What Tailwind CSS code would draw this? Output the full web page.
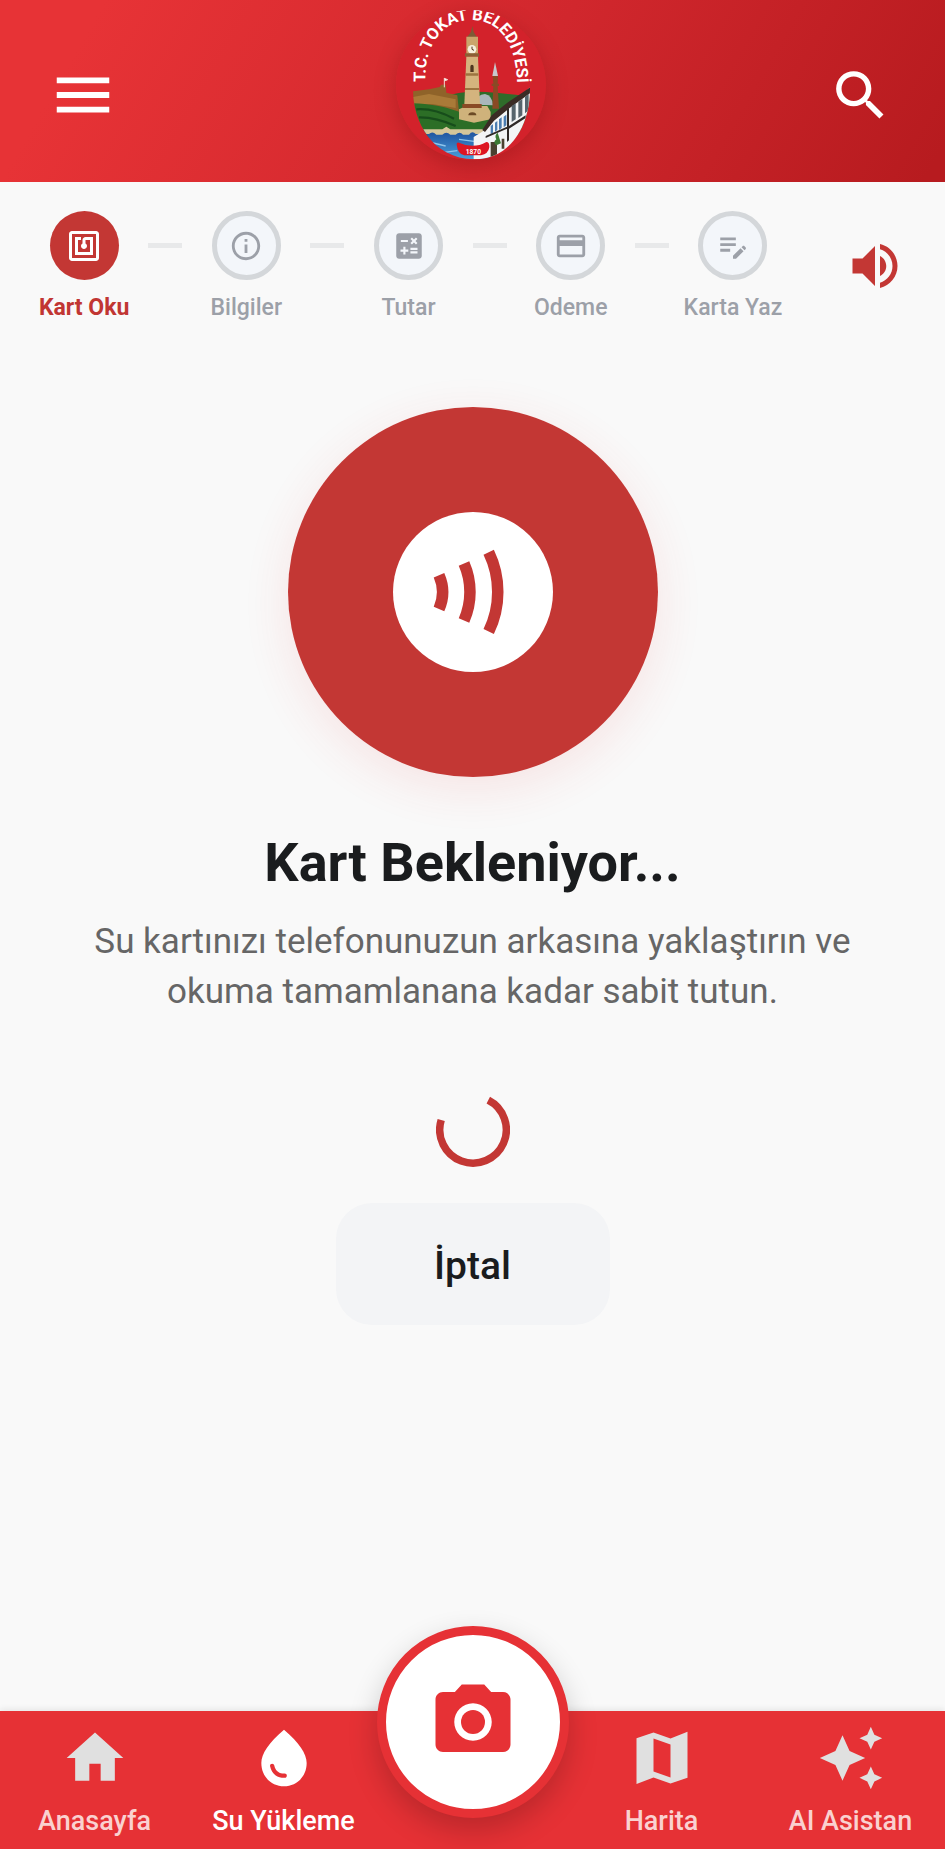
<!DOCTYPE html>
<html lang="tr">
<head>
    <meta charset="UTF-8">
    <meta name="viewport" content="width=device-width, initial-scale=1.0">
    <title>Su Yükleme - Kart Oku</title>
    <script src="https://cdn.jsdelivr.net/npm/@tailwindcss/browser@4"></script>
</head>
<body class="min-h-screen flex flex-col bg-[#f9f9f9] font-[Roboto,sans-serif] text-[#1a1c1e]">

    <!-- Header -->
    <header class="h-[182px] pl-12 pr-[52px] pt-2 flex items-center justify-between bg-[linear-gradient(120deg,#e73336_10%,#d1272d_55%,#b71b1f_98%)]">
        <button type="button" aria-label="Menü" class="flex-1 flex text-white">
            <svg class="size-[70px]" viewBox="0 0 24 24" fill="currentColor"><path d="M3 18h18v-2H3v2zm0-5h18v-2H3v2zm0-7v2h18V6H3z"/></svg>
        </button>

        <a href="#" aria-label="T.C. Tokat Belediyesi" class="mb-5 rounded-full shadow-[0_6px_22px_rgba(90,0,0,0.25)]">
            <svg class="size-[150px]" viewBox="51 24 450 450">
                <defs>
                    <clipPath id="round"><circle cx="276" cy="249" r="225"/></clipPath>
                    <clipPath id="shield"><path d="M102 20H453V262C453 350 410 470 285 472C160 470 102 360 102 262Z"/></clipPath>
                    <path id="arc" d="M139 240C136 130 190 54 277 54C364 54 420 130 414 275"/>
                    <linearGradient id="water" x1="0" y1="0" x2="0" y2="1">
                        <stop offset="0" stop-color="#1d4f9c"/>
                        <stop offset="1" stop-color="#4ba3dd"/>
                    </linearGradient>
                </defs>
                <g clip-path="url(#round)">
                    <circle cx="276" cy="249" r="225" fill="#d3222b"/>
                    <g clip-path="url(#shield)">
                        <!-- hills and castle -->
                        <path d="M195 285Q250 262 350 272T460 285V400H195Z" fill="#2f6b2a"/>
                        <path d="M100 268L150 262L182 255L186 248H200L202 272L235 280L240 330L246 400H100Z" fill="#8f6329"/>
                        <path d="M100 285L150 276L230 292V318L160 306L100 308Z" fill="#a97a38"/>
                        <path d="M196 256V228M196 229L206 233L196 237" stroke="#f3d9d0" stroke-width="3" fill="#fff"/>
                        <path d="M100 304C150 306 190 312 236 328C265 342 300 350 360 322V410H100Z" fill="#2c6e26"/>
                        <path d="M112 322Q165 318 225 350M120 346Q170 345 230 372" stroke="#174d1b" stroke-width="7" fill="none"/>
                        <!-- river and bridge -->
                        <path d="M120 385H330V475H120Z" fill="url(#water)"/>
                        <path d="M150 420L200 432M190 452L235 446M240 412L285 418" stroke="#8fc4ea" stroke-width="4"/>
                        <path d="M126 382H190L202 374L214 382H312V396H290Q280 385 270 398H252Q242 386 230 398H214Q202 386 190 398H172Q160 386 150 396H126Z" fill="#d5c69a"/>
                        <!-- mosque and minaret -->
                        <path d="M290 308Q292 276 318 276Q340 280 342 310Z" fill="#a9b6bb"/>
                        <path d="M240 322L262 312H325L335 330V352L285 362L240 352Z" fill="#cfb27b"/>
                        <path d="M268 340a12 9 0 0 1 24 0" fill="#6b4a25"/>
                        <path d="M348 180L357 222H340Z" fill="#c8c8cc"/>
                        <path d="M341 222H357L356 245H360V252H356L360 320H340L343 252H338V245H343Z" fill="#8a4a25"/>
                        <!-- clock tower -->
                        <path d="M280 72L284 90L294 106H264L276 90Z" fill="#7d5a35"/>
                        <path d="M262 104H297V158H262Z" fill="#caa56b"/>
                        <circle cx="279" cy="142" r="13" fill="#f6efdc"/>
                        <path d="M279 134V142L285 145" stroke="#4f3720" stroke-width="3" fill="none"/>
                        <path d="M258 154H300V164H258Z" fill="#8a5f34"/>
                        <path d="M262 164H297L303 308H256Z" fill="#d4b47e"/>
                        <path d="M260 214H298V221H260ZM258 258H300V264H258Z" fill="#9c7440"/>
                        <path d="M274 194a5 6 0 0 1 10 0V210H274Z" fill="#4f3720"/>
                        <path d="M250 306H308V318H250Z" fill="#8a4a25"/>
                        <!-- old houses -->
                        <path d="M455 255L392 308L340 352L312 388L284 405V475H460Z" fill="#f3f5f6"/>
                        <path d="M455 255L385 302L338 340L310 384L318 390L345 356L392 318L455 272Z" fill="#3a2b25"/>
                        <path d="M398 312L410 304V352L398 360ZM418 300L430 290V340L418 348ZM438 284L449 276V325L438 334Z" fill="#56646c"/>
                        <path d="M360 352L368 346V378L360 384ZM374 344L382 338V370L374 376ZM335 372L342 367V392L335 397ZM348 362L355 357V384L348 389Z" fill="#4b7db1"/>
                        <path d="M384 322L390 318V415L384 420ZM320 402L384 374V380L320 408ZM390 372L440 340V348L390 380Z" fill="#2f2a28"/>
                        <path d="M335 420H354V470H335ZM368 410H376V440H368Z" fill="#4a4130"/>
                        <path d="M356 392Q345 400 352 412Q340 420 352 430L366 424Z" fill="#3b7a34"/>
                    </g>
                    <path d="M233 428Q232 420 240 422Q284 442 322 420Q332 420 331 436Q328 456 306 460H256Q236 456 233 428Z" fill="#dd1622"/>
                    <text x="283" y="457" text-anchor="middle" class="font-[Roboto,sans-serif] font-bold text-[20px]" fill="#fff">1870</text>
                    <text class="font-[Roboto,sans-serif] font-bold text-[49px]" fill="#fff"><textPath href="#arc">T.C. TOKAT BELEDİYESİ</textPath></text>
                </g>
            </svg>
        </a>

        <button type="button" aria-label="Ara" class="flex-1 flex justify-end text-white">
            <svg class="size-[65px]" viewBox="0 0 24 24" fill="currentColor"><path d="M15.5 14h-.79l-.28-.27A6.471 6.471 0 0 0 16 9.5 6.5 6.5 0 1 0 9.5 16c1.61 0 3.09-.59 4.23-1.57l.27.28v.79l5 4.99L20.49 19l-4.99-5zm-6 0C7.01 14 5 11.99 5 9.5S7.01 5 9.5 5 14 7.01 14 9.5 11.99 14 9.5 14z"/></svg>
        </button>
    </header>

    <!-- Steps -->
    <div class="px-5 pt-[29px] flex items-center gap-7">
        <ol class="flex-1 flex items-start text-[23px] leading-[27px] font-medium text-[#9ca0a8]">
            <li class="flex-1 flex flex-col items-center gap-3.5 text-[#c13633] font-bold">
                <span class="size-[69px] rounded-full bg-[#c33734] text-white flex items-center justify-center">
                    <svg class="size-9" viewBox="0 0 24 24" fill="currentColor"><path d="M20 2H4c-1.1 0-2 .9-2 2v16c0 1.1.9 2 2 2h16c1.1 0 2-.9 2-2V4c0-1.1-.9-2-2-2zm0 18H4V4h16v16zM18 6h-5c-1.1 0-2 .9-2 2v2.28c-.6.35-1 .98-1 1.72 0 1.1.9 2 2 2s2-.9 2-2c0-.74-.4-1.38-1-1.72V8h3v8H8V8h2V6H6v12h12V6z"/></svg>
                </span>
                Kart Oku
            </li>
            <li aria-hidden="true" class="w-[34px] h-[5px] mt-8 bg-[#e8e9ea]"></li>
            <li class="flex-1 flex flex-col items-center gap-3.5">
                <span class="size-[69px] rounded-full border-5 border-[#d4d7da] bg-[#f3f6fa] flex items-center justify-center">
                    <svg class="size-[34px]" viewBox="0 0 24 24" fill="currentColor"><path d="M11 7h2v2h-2zm0 4h2v6h-2zm1-9C6.48 2 2 6.48 2 12s4.48 10 10 10 10-4.48 10-10S17.52 2 12 2zm0 18c-4.41 0-8-3.59-8-8s3.59-8 8-8 8 3.59 8 8-3.59 8-8 8z"/></svg>
                </span>
                Bilgiler
            </li>
            <li aria-hidden="true" class="w-[34px] h-[5px] mt-8 bg-[#e8e9ea]"></li>
            <li class="flex-1 flex flex-col items-center gap-3.5">
                <span class="size-[69px] rounded-full border-5 border-[#d4d7da] bg-[#f3f6fa] flex items-center justify-center">
                    <svg class="size-[34px]" viewBox="0 0 24 24" fill="currentColor"><path d="M19 3H5c-1.1 0-2 .9-2 2v14c0 1.1.9 2 2 2h14c1.1 0 2-.9 2-2V5c0-1.1-.9-2-2-2zm-5.97 4.06L14.09 6l1.41 1.41L16.91 6l1.06 1.06-1.41 1.41 1.41 1.41-1.06 1.06-1.41-1.4-1.41 1.41-1.06-1.06 1.41-1.41-1.41-1.42zm-6.78.66h5v1.5h-5v-1.5zM11.5 16h-2v2H8v-2H6v-1.5h2v-2h1.5v2h2V16zm6.5 1.25h-5v-1.5h5v1.5zm0-2.5h-5v-1.5h5v1.5z"/></svg>
                </span>
                Tutar
            </li>
            <li aria-hidden="true" class="w-[34px] h-[5px] mt-8 bg-[#e8e9ea]"></li>
            <li class="flex-1 flex flex-col items-center gap-3.5">
                <span class="size-[69px] rounded-full border-5 border-[#d4d7da] bg-[#f3f6fa] flex items-center justify-center">
                    <svg class="size-[34px]" viewBox="0 0 24 24" fill="currentColor"><path d="M20 4H4c-1.11 0-1.99.89-1.99 2L2 18c0 1.11.89 2 2 2h16c1.11 0 2-.89 2-2V6c0-1.11-.89-2-2-2zm0 14H4v-6h16v6zm0-10H4V6h16v2z"/></svg>
                </span>
                Odeme
            </li>
            <li aria-hidden="true" class="w-[34px] h-[5px] mt-8 bg-[#e8e9ea]"></li>
            <li class="flex-1 flex flex-col items-center gap-3.5">
                <span class="size-[69px] rounded-full border-5 border-[#d4d7da] bg-[#f3f6fa] flex items-center justify-center">
                    <svg class="size-[34px]" viewBox="0 0 24 24" fill="currentColor"><path d="M3 10h11v2H3v-2zm0-2h11V6H3v2zm0 8h7v-2H3v2zm15.01-3.13.71-.71c.39-.39 1.02-.39 1.41 0l.71.71c.39.39.39 1.02 0 1.41l-.71.71-2.12-2.12zm-.71.71-5.3 5.3V21h2.12l5.3-5.3-2.12-2.12z"/></svg>
                </span>
                Karta Yaz
            </li>
        </ol>
        <button type="button" aria-label="Ses" class="w-[100px] flex justify-center text-[#c33734]">
            <svg class="size-[60px]" viewBox="0 0 24 24" fill="currentColor"><path d="M3 9v6h4l5 5V4L7 9H3zm13.5 3c0-1.77-1.02-3.29-2.5-4.03v8.05c1.48-.73 2.5-2.25 2.5-4.02zM14 3.23v2.06c2.89.86 5 3.54 5 6.71s-2.11 5.85-5 6.71v2.06c4.01-.91 7-4.49 7-8.77s-2.99-7.86-7-8.77z"/></svg>
        </button>
    </div>

    <!-- Card reading -->
    <main class="flex-1 flex flex-col items-center px-20 pt-[86px] pb-40 text-center">
        <div class="size-[370px] rounded-full bg-[#c33734] flex items-center justify-center shadow-[0_12px_48px_rgba(229,57,53,0.11)]">
            <div class="size-40 rounded-full bg-white">
                <svg class="size-40 text-[#c33734]" viewBox="0 0 160 160" fill="none" stroke="currentColor" stroke-width="11.5">
                    <path d="M46 63.3A42 42 0 0 1 46 97M71 51.5A71 71 0 0 1 71 108.5M95.7 40.3A91 91 0 0 1 95.7 119.5"/>
                </svg>
            </div>
        </div>

        <h1 class="mt-[54px] text-[54px] leading-[64px] font-bold">Kart Bekleniyor...</h1>
        <p class="mt-[22px] text-[35px] leading-[50px] text-[#666]">Su kartınızı telefonunuzun arkasına yaklaştırın ve okuma tamamlanana kadar sabit tutun.</p>

        <svg class="mt-[76px] size-[74px] text-[#c33734]" viewBox="0 0 74 74" fill="none" stroke="currentColor" stroke-width="7.5">
            <path d="M52.3 7.2A33.3 33.3 0 1 1 5.2 27"/>
        </svg>

        <button type="button" class="mt-9 pt-1 w-[274px] h-[122px] rounded-[36px] bg-[#f3f4f6] text-[39px] leading-[44px] font-medium">İptal</button>
    </main>

    <!-- Bottom navigation -->
    <nav class="sticky bottom-0 h-[138px] bg-[#e63135] shadow-[0_-2px_6px_rgba(0,0,0,0.08)]">
        <div class="h-full grid grid-cols-5 pt-[13px] text-[27px] leading-[30px] font-medium text-[#fad1d0]">
            <a href="#" class="flex flex-col items-center gap-3.5 whitespace-nowrap">
                <svg class="size-[68px] text-[#e0e0e0]" viewBox="0 0 24 24" fill="currentColor"><path d="M10 20v-6h4v6h5v-8h3L12 3 2 12h3v8z"/></svg>
                Anasayfa
            </a>
            <a href="#" aria-current="page" class="flex flex-col items-center gap-3.5 whitespace-nowrap text-white">
                <svg class="size-[68px]" viewBox="0 0 24 24" fill="currentColor"><path d="M12 2c-5.33 4.55-8 8.48-8 11.8 0 4.98 3.8 8.2 8 8.2s8-3.22 8-8.2c0-3.32-2.67-7.25-8-11.8zM7.83 14c.37 0 .67.26.74.62.41 2.22 2.28 2.98 3.64 2.87.43-.02.79.32.79.75 0 .4-.32.73-.72.75-2.13.13-4.62-1.09-5.19-4.12a.75.75 0 0 1 .74-.87z"/></svg>
                Su Yükleme
            </a>
            <div class="flex justify-center">
                <button type="button" aria-label="Kamera" class="-mt-[98px] size-48 shrink-0 rounded-full border-9 border-[#e63135] bg-white text-[#e63135] flex items-center justify-center shadow-[0_12px_30px_rgba(0,0,0,0.2)]">
                    <svg class="size-[90px]" viewBox="0 0 24 24" fill="currentColor"><circle cx="12" cy="12" r="3.2"/><path d="M9 2L7.17 4H4c-1.1 0-2 .9-2 2v12c0 1.1.9 2 2 2h16c1.1 0 2-.9 2-2V6c0-1.1-.9-2-2-2h-3.17L15 2H9zm3 15c-2.76 0-5-2.24-5-5s2.24-5 5-5 5 2.24 5 5-2.24 5-5 5z"/></svg>
                </button>
            </div>
            <a href="#" class="flex flex-col items-center gap-3.5 whitespace-nowrap">
                <svg class="size-[68px] text-[#e0e0e0]" viewBox="0 0 24 24" fill="currentColor"><path d="M15 5.1L9 3 3 5.02v16.2l6-2.33 6 2.1 6-2.02V2.77L15 5.1zm0 13.79l-6-2.11V5.11l6 2.11v11.67z"/></svg>
                Harita
            </a>
            <a href="#" class="flex flex-col items-center gap-3.5 whitespace-nowrap">
                <svg class="size-[68px] text-[#e0e0e0]" viewBox="0 0 24 24" fill="currentColor"><path d="M19 9l1.25-2.75L23 5l-2.75-1.25L19 1l-1.25 2.75L15 5l2.75 1.25L19 9zm-7.5.5L9 4 6.5 9.5 1 12l5.5 2.5L9 20l2.5-5.5L17 12l-5.5-2.5zM19 15l-1.25 2.75L15 19l2.75 1.25L19 23l1.25-2.75L23 19l-2.75-1.25L19 15z"/></svg>
                AI Asistan
            </a>
        </div>
    </nav>

</body>
</html>
